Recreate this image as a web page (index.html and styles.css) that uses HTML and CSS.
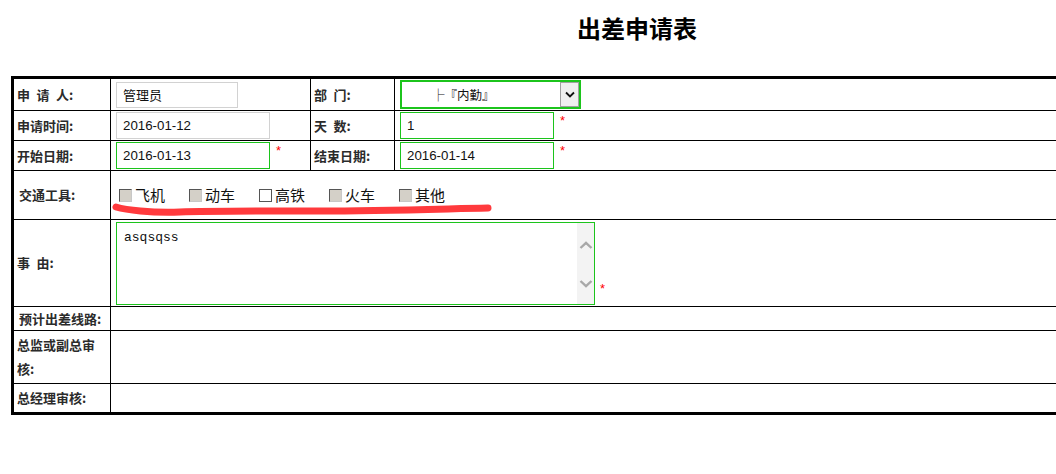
FILE: index.html
```html
<!DOCTYPE html>
<html lang="zh-CN">
<head>
    <meta charset="UTF-8">
    <meta name="viewport" content="width=device-width, initial-scale=1.0">
    <title>出差申请表</title>
    <link rel="stylesheet" href="styles.css">
</head>
<body>

    <h1 class="title">出差申请表</h1>

    <div class="sheet">
        <table class="form">
            <colgroup>
                <col class="c-label">
                <col class="c-field">
                <col class="c-label2">
                <col>
            </colgroup>
            <tr class="row-a">
                <td class="lbl">申&ensp;请&ensp;人:</td>
                <td class="fld"><div class="cell"><input class="txt txt-name" type="text" value="管理员"></div></td>
                <td class="lbl">部&ensp;门:</td>
                <td class="fld last">
                    <div class="cell">
                        <div class="dept">
                            <span class="dept-text">├『内勤』</span>
                            <span class="dept-btn">
                                <svg width="10" height="7" viewBox="0 0 10 7"><path d="M1 1.5 L5 5.5 L9 1.5" fill="none" stroke="#111" stroke-width="1.8"/></svg>
                            </span>
                        </div>
                    </div>
                </td>
            </tr>
            <tr class="row-b">
                <td class="lbl">申请时间:</td>
                <td class="fld"><div class="cell"><input class="txt" type="text" value="2016-01-12"></div></td>
                <td class="lbl">天&ensp;数:</td>
                <td class="fld last"><div class="cell"><input class="txt ok" type="text" value="1"><span class="req">*</span></div></td>
            </tr>
            <tr class="row-b">
                <td class="lbl">开始日期:</td>
                <td class="fld"><div class="cell"><input class="txt ok" type="text" value="2016-01-13"><span class="req">*</span></div></td>
                <td class="lbl">结束日期:</td>
                <td class="fld last"><div class="cell"><input class="txt ok" type="text" value="2016-01-14"><span class="req">*</span></div></td>
            </tr>
            <tr class="row-tool">
                <td class="lbl ind">交通工具:</td>
                <td class="fld last tools" colspan="3">
                    <div class="cell">
                        <label class="opt"><input type="checkbox" class="cb">飞机</label>
                        <label class="opt"><input type="checkbox" class="cb">动车</label>
                        <label class="opt"><input type="checkbox" class="cb cb-on">高铁</label>
                        <label class="opt"><input type="checkbox" class="cb">火车</label>
                        <label class="opt"><input type="checkbox" class="cb">其他</label>
                    </div>
                    <svg class="scribble" width="400" height="24" viewBox="0 0 400 24">
                        <path d="M6 9 C 16 12, 40 15, 70 14 S 150 13, 210 13 S 330 11, 378 10" fill="none" stroke="#ff3a3d" stroke-width="7" stroke-linecap="round"/>
                    </svg>
                </td>
            </tr>
            <tr class="row-memo">
                <td class="lbl">事&ensp;由:</td>
                <td class="fld last memo-cell" colspan="3">
                    <div class="cell cell-end">
                        <div class="memo">
                            <textarea class="memo-text">asqsqss</textarea>
                            <div class="memo-bar">
                                <svg width="14" height="8" viewBox="0 0 14 8"><path d="M1.5 7 L7 1.8 L12.5 7" fill="none" stroke="#a8a8a8" stroke-width="2.4"/></svg>
                                <svg width="14" height="8" viewBox="0 0 14 8"><path d="M1.5 1 L7 6.2 L12.5 1" fill="none" stroke="#a8a8a8" stroke-width="2.4"/></svg>
                            </div>
                        </div>
                        <span class="req req-low">*</span>
                    </div>
                </td>
            </tr>
            <tr class="row-route">
                <td class="lbl ind">预计出差线路:</td>
                <td class="fld last" colspan="3"></td>
            </tr>
            <tr class="row-audit">
                <td class="lbl wrap">总监或副总审核:</td>
                <td class="fld last" colspan="3"></td>
            </tr>
            <tr class="row-end">
                <td class="lbl">总经理审核:</td>
                <td class="fld last" colspan="3"></td>
            </tr>
        </table>
    </div>

</body>
</html>
```

FILE: styles.css
```css
body {
    margin: 0;
    font-family: "Noto Sans CJK SC", "Liberation Sans", sans-serif;
    background: #fff;
    color: #111;
}
.title {
    margin: 0;
    padding: 12px 0 0 577px;
    font-size: 24px;
    line-height: 32px;
    font-weight: bold;
    color: #000;
}
.sheet {
    margin-top: 32px;
    padding-left: 11px;
    overflow: hidden;
}
.form {
    width: 1250px;
    table-layout: fixed;
    border-collapse: separate;
    border-spacing: 0;
    border: 3px solid #000;
}
.c-label {
    width: 97px;
}
.c-field {
    width: 200px;
}
.c-label2 {
    width: 84px;
}
.form td {
    box-sizing: border-box;
    padding: 0;
    border-right: 1px solid #000;
    border-bottom: 1px solid #000;
    vertical-align: middle;
}
.form td.last {
    border-right: none;
}
.form .row-end td {
    border-bottom: none;
}
.row-a td {
    height: 32px;
}
.row-b td {
    height: 30px;
}
.row-tool td {
    height: 49px;
}
.row-memo td {
    height: 87px;
}
.row-route td {
    height: 24px;
}
.row-audit td {
    height: 53px;
}
.row-end td {
    height: 28px;
}
.lbl {
    padding-left: 3px !important;
    padding-right: 6px !important;
    font-size: 13px;
    font-weight: bold;
    color: #2b2b2b;
    line-height: 24px;
}
.row-route .lbl {
    line-height: 20px;
}
.lbl.ind {
    padding-left: 5px !important;
    padding-right: 3px !important;
}
.fld {
    padding-left: 5px !important;
    white-space: nowrap;
    line-height: 1;
}
.cell {
    display: flex;
    align-items: center;
}
.cell-end {
    align-items: flex-end;
}
.txt {
    box-sizing: border-box;
    width: 154px;
    height: 27px;
    margin: 0;
    padding: 0 6px;
    border: 1px solid #d2d2d2;
    font-family: "Liberation Sans", "Noto Sans CJK SC", sans-serif;
    font-size: 13.3px;
    color: #111;
    outline: none;
}
.txt-name {
    width: 122px;
    height: 26px;
    font-family: "Noto Sans CJK SC", sans-serif;
    font-size: 13px;
}
.txt.ok {
    border-color: #1cc41c;
}
.req {
    align-self: flex-start;
    margin: 2px 0 0 6px;
    color: #f00;
    font-family: "Liberation Sans", sans-serif;
    font-size: 13px;
}
.req-low {
    align-self: flex-end;
    margin: 0 0 10px 5px;
}
.dept {
    box-sizing: border-box;
    display: flex;
    width: 181px;
    height: 29px;
    border: 2px solid #1cc41c;
}
.dept-text {
    flex: 1;
    padding-left: 30px;
    font-size: 12.5px;
    line-height: 25px;
    color: #111;
}
.dept-btn {
    box-sizing: border-box;
    display: flex;
    align-items: center;
    justify-content: center;
    width: 19px;
    border: 1px solid #a0a0a0;
    background: #efefef;
}
.tools {
    position: relative;
    padding-left: 8px !important;
}
.opt {
    display: flex;
    align-items: center;
    width: 70px;
    font-size: 15px;
    color: #111;
    line-height: 20px;
}
.cb {
    appearance: none;
    -webkit-appearance: none;
    box-sizing: border-box;
    flex: none;
    width: 13px;
    height: 13px;
    margin: 0 3px 0 0;
    border: 1px solid;
    border-color: #555 #c8c8c8 #c8c8c8 #555;
    background: #d4d0c8;
}
.cb-on {
    border: 1px solid #555;
    background: #fff;
}
.scribble {
    position: absolute;
    left: -1px;
    top: 27px;
    pointer-events: none;
}
.memo-cell {
    vertical-align: top !important;
    padding-top: 2px !important;
}
.memo {
    box-sizing: border-box;
    display: flex;
    width: 479px;
    height: 83px;
    border: 1px solid #1cc41c;
}
.memo-text {
    flex: 1;
    margin: 0;
    padding: 7px 7px;
    border: none;
    resize: none;
    outline: none;
    font-family: "Liberation Mono", monospace;
    font-size: 13px;
    line-height: 15px;
    color: #111;
}
.memo-bar {
    display: flex;
    flex-direction: column;
    justify-content: space-between;
    align-items: center;
    width: 17px;
    padding: 18px 0 16px;
    background: #f3f3f3;
}
.wrap {
    white-space: normal;
}
```
